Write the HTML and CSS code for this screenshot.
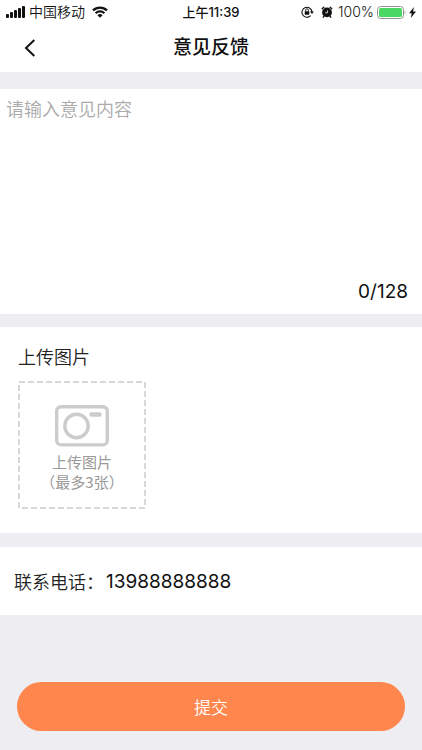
FILE: index.html
```html
<!DOCTYPE html>
<html lang="zh-CN">
<head>
<meta charset="utf-8">
<meta name="viewport" content="width=device-width, initial-scale=1">
<title>意见反馈</title>
<link rel="stylesheet" href="styles.css">
</head>
<body>
<div class="status">
  <div class="status-side">
    <svg class="signal" width="20" height="12" viewBox="0 0 20 12" aria-hidden="true">
      <rect x="0" y="8" width="3" height="4" rx="1"/><rect x="4" y="6" width="3" height="6" rx="1"/><rect x="8" y="4" width="3" height="8" rx="1"/><rect x="12" y="2" width="3" height="10" rx="1"/><rect x="16" y="0" width="3" height="12" rx="1"/>
    </svg>
    <span class="carrier">中国移动</span>
    <svg class="wifi" width="16" height="12" viewBox="0 0 16 12" aria-hidden="true">
      <path d="M1 4.4a10 10 0 0 1 14 0M3.6 7.2a6.3 6.3 0 0 1 8.8 0" fill="none" stroke="currentColor" stroke-width="2.2"/>
      <path d="M8 11.8 5.4 9.2a3.8 3.8 0 0 1 5.2 0z"/>
    </svg>
  </div>
  <span class="clock">上午11:39</span>
  <div class="status-side status-right">
    <svg width="13" height="12" viewBox="0 0 13 12" aria-hidden="true">
      <path d="M9.7 9.7A5 5 0 1 1 11 6" fill="none" stroke="currentColor" stroke-width="1.1"/>
      <path d="M8.9 5.6h4L11 8z"/>
      <rect x="3.7" y="5.3" width="4.6" height="3.4" rx=".4"/>
      <path d="M4.6 5.5V4.2a1.4 1.4 0 0 1 2.8 0v1.3" fill="none" stroke="currentColor" stroke-width=".9"/>
    </svg>
    <svg class="alarm" width="12" height="12" viewBox="0 0 12 12" aria-hidden="true">
      <circle cx="6" cy="6.4" r="4.9"/>
      <path d="M1.2 2.8 2.8 1.3M10.8 2.8 9.2 1.3M3 10.2l-.7 1M9 10.2l.7 1" stroke="currentColor" stroke-width="1.4" stroke-linecap="round"/>
      <path d="M6.4 4.4v2.4H4.2" fill="none" stroke="#fff" stroke-width=".8"/>
    </svg>
    <span class="percent">100%</span>
    <svg width="29" height="13" viewBox="0 0 29 13" aria-hidden="true">
      <rect x=".5" y=".5" width="26" height="12" rx="3" fill="#fff" stroke="#8f968f"/>
      <rect x="2" y="2" width="23" height="9" rx="1.5" fill="#4bd763"/>
      <path d="M27.6 4.5q1.6 2 0 4z" fill="#8f968f"/>
    </svg>
    <svg width="7" height="11" viewBox="0 0 7 11" aria-hidden="true"><path d="M5 0 0 6.2h2.8L1.8 11 7 4.5H4z"/></svg>
  </div>
</div>
<header class="nav">
  <button class="back" type="button" aria-label="返回">
    <svg width="12" height="18" viewBox="0 0 12 18" aria-hidden="true"><path d="M10.3 1 2 9l8.3 8" fill="none" stroke="currentColor" stroke-width="2"/></svg>
  </button>
  <h1>意见反馈</h1>
</header>
<form class="form">
  <section class="panel feedback">
    <textarea maxlength="128" aria-label="意见内容" placeholder="请输入意见内容"></textarea>
    <output class="count">0/128</output>
  </section>
  <section class="panel upload">
    <h2>上传图片</h2>
    <button class="picker" type="button">
      <svg class="outline" aria-hidden="true"><rect x="1" y="1"/></svg>
      <svg class="camera" width="54" height="42" viewBox="0 0 54 42" stroke-width="3.4" aria-hidden="true">
        <rect x="1.7" y="1.7" width="50.6" height="38.2" rx="4.5"/>
        <circle cx="21.5" cy="21" r="11.7"/>
        <path d="M36.5 9.5h8" stroke-width="4.4" stroke-linecap="round"/>
      </svg>
      <span class="picker-text">上传图片<br>（最多3张）</span>
    </button>
  </section>
  <section class="panel phone">
    <label for="phone">联系电话：</label>
    <input id="phone" type="tel" value="13988888888">
  </section>
  <div class="actions"><button class="submit" type="submit">提交</button></div>
</form>
</body>
</html>
```
FILE: styles.css
```css
* { box-sizing: border-box; }

body {
  margin: 0;
  min-height: 100vh;
  background: #eeedf2;
  color: #111;
  font-family: Inter, "Noto Sans CJK SC", sans-serif;
}

button, input, textarea { font: inherit; color: inherit; border: 0; }
button { cursor: pointer; }
svg { display: block; flex: none; fill: currentColor; }

.status {
  display: grid;
  grid-template-columns: 1fr auto 1fr;
  align-items: center;
  height: 24px;
  padding: 0 6px;
  background: #fff;
  font-size: 14px;
  line-height: 24px;
}
.status-side { display: flex; align-items: center; gap: 3px; white-space: nowrap; }
.carrier, .percent { font-weight: 350; }
.status-right { justify-content: flex-end; }
.wifi { margin-left: 4px; }
.clock { font-size: 13px; font-weight: 500; }
.alarm { margin: 0 2px 0 4px; }

.nav {
  display: grid;
  grid-template-columns: 48px 1fr 48px;
  align-items: center;
  height: 48px;
  background: #fff;
}
.back {
  display: flex;
  align-items: center;
  height: 48px;
  padding: 0 0 0 24px;
  background: none;
}
h1, h2 { margin: 0; font-size: 18px; font-weight: 350; }
h1 { font-size: 19px; font-weight: 500; line-height: 24px; text-align: center; }

.panel { background: #fff; }

.feedback { margin-top: 17px; padding: 6px; }
.feedback textarea {
  display: block;
  width: 100%;
  height: 180px;
  padding: 0;
  resize: none;
  outline: 0;
  background: none;
  font-size: 18px;
  font-weight: 350;
  line-height: 30px;
}
.feedback textarea::placeholder { color: #aaa; opacity: 1; }
.count {
  display: block;
  padding: 5px 8px 4px;
  text-align: right;
  font-size: 19px;
  line-height: 24px;
}

.upload { margin-top: 13px; padding: 16px 18px 24px; }
.upload h2 { color: #222; line-height: 30px; }
.picker {
  position: relative;
  display: flex;
  flex-direction: column;
  align-items: center;
  width: 128px;
  height: 128px;
  margin-top: 8px;
  padding: 24px 0 0;
  background: none;
  color: #999;
}
.outline { position: absolute; inset: 0; width: 100%; height: 100%; }
.outline rect {
  width: calc(100% - 2px);
  height: calc(100% - 2px);
  fill: none;
  stroke: #ccc;
  stroke-width: 1.5px;
  stroke-dasharray: 6 3;
}
.camera { fill: none; stroke: #ccc; }
.picker-text {
  margin-top: 5px;
  white-space: nowrap;
  font-family: "Noto Sans CJK SC", sans-serif;
  font-size: 15px;
  line-height: 20px;
}

.phone {
  display: flex;
  align-items: center;
  gap: 2px;
  height: 68px;
  margin-top: 14px;
  padding: 0 14px;
  font-size: 18px;
}
.phone label { color: #222; font-weight: 350; white-space: nowrap; }
.phone input {
  flex: 1;
  min-width: 0;
  padding: 0;
  outline: 0;
  background: none;
  font-size: 19px;
}

.actions { padding: 67px 17px 19px; }
.submit {
  display: block;
  width: 100%;
  height: 49px;
  border-radius: 25px;
  background: #ff874d;
  color: #fff;
  font-size: 17px;
  font-weight: 350;
}
```
